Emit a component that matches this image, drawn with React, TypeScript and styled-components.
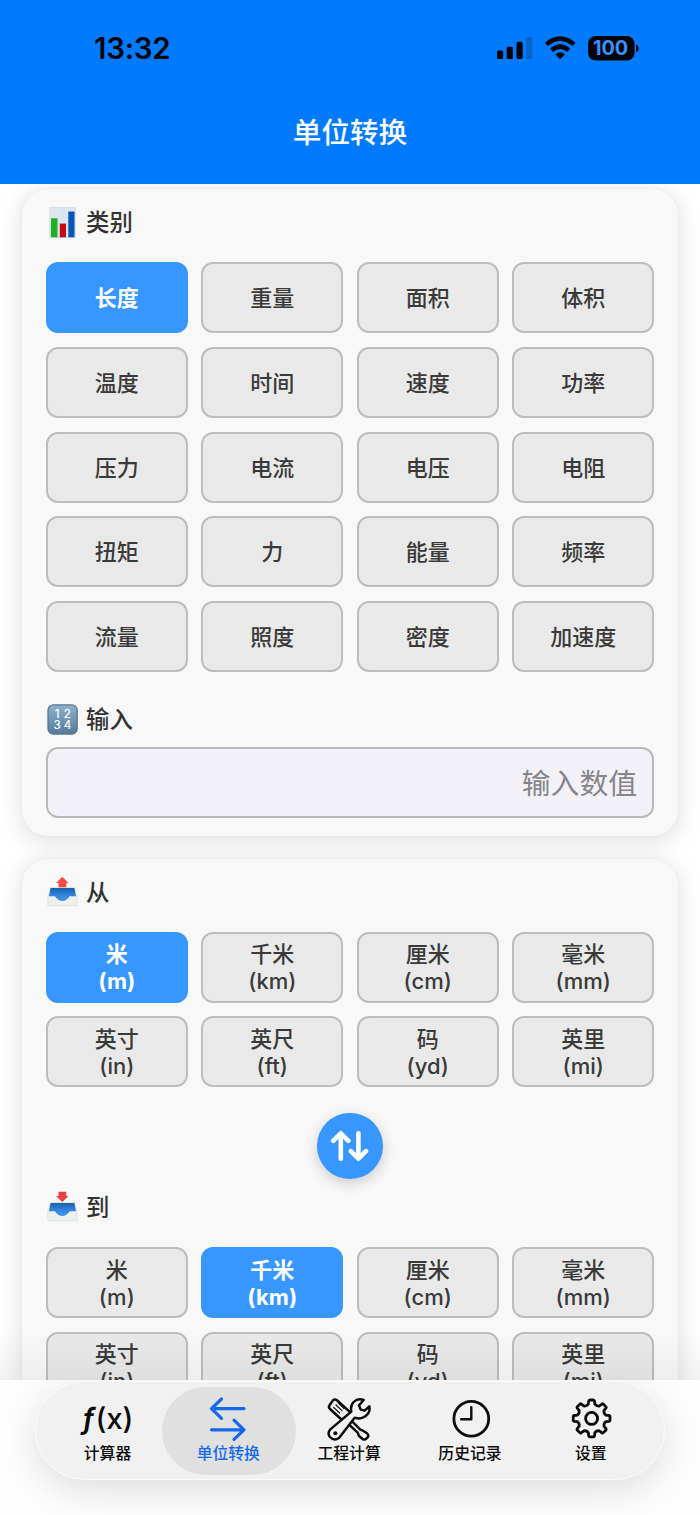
import React from "react";
import styled, { createGlobalStyle, css } from "styled-components";

const GlobalStyle = createGlobalStyle`
  * { box-sizing: border-box; }
  html, body { margin: 0; padding: 0; background: #fff; }
  body { font-family: Inter, "Noto Sans CJK SC", sans-serif; }
  button { font-family: inherit; }
`;

const Screen = styled.div`
  display: flex;
  flex-direction: column;
  width: 700px;
  height: 1515px;
  overflow: hidden;
  background: #fefefe;
`;

const Header = styled.header`
  flex: none;
  height: 183.5px;
  background: #007aff;
`;

const StatusBar = styled.div`
  display: flex;
  align-items: center;
  justify-content: space-between;
  height: 95px;
  padding: 0 61px 0 94px;
`;

const Clock = styled.span`
  font-size: 29.5px;
  font-weight: 600;
  letter-spacing: -0.3px;
  color: #04050c;
`;

const PageTitle = styled.h1`
  margin: 0;
  height: 75px;
  line-height: 75px;
  text-align: center;
  font-size: 28.6px;
  font-weight: 500;
  color: #fff;
`;

const Content = styled.main`
  flex: none;
  position: relative;
  height: 1196.5px;
  padding: 5.8px 22px 0;
  overflow: hidden;
  display: flex;
  flex-direction: column;
  gap: 22.8px;

  &::after {
    content: "";
    position: absolute;
    inset: auto 0 0 0;
    height: 50px;
    background: linear-gradient(rgba(0, 0, 0, 0), rgba(0, 0, 0, 0.045));
  }
`;

const Card = styled.section`
  flex: none;
  padding: 13px 24px 18px;
  border-radius: 25px;
  background: #f8f8f8;
  box-shadow: 0 4px 24px rgba(0, 0, 0, 0.13), 0 0 2px rgba(0, 0, 0, 0.07);
`;

const SectionTitle = styled.h2<{ $top?: number; $bottom?: number }>`
  display: flex;
  align-items: center;
  gap: 8px;
  height: 40px;
  margin: ${(p) => p.$top ?? 0}px 0 ${(p) => p.$bottom ?? 20.2}px;
  padding-left: 1px;
  font-size: 23.4px;
  font-weight: 500;
  color: #333;

  svg { flex: none; }
  span { padding-bottom: 2px; }
`;

const OptionGrid = styled.div`
  display: grid;
  grid-template-columns: repeat(4, 1fr);
  grid-auto-rows: 71px;
  gap: 13.6px 13.8px;
`;

const Option = styled.button<{ $selected?: boolean }>`
  display: flex;
  flex-direction: column;
  align-items: center;
  justify-content: center;
  padding: 2px 0 0;
  border: 2px solid #bdbdbd;
  border-radius: 12px;
  background: #e9e9e9;
  color: #3a3a3a;
  font-size: 22px;
  font-weight: 500;
  line-height: 27px;
  ${(p) =>
    p.$selected &&
    css`
      border-color: #3797ff;
      background: #3797ff;
      color: #fff;
      font-weight: 700;
    `}
`;

const ValueInput = styled.input`
  display: block;
  width: 100%;
  height: 70.7px;
  padding: 2px 15px 0;
  border: 2px solid #b9b9bb;
  border-radius: 12px;
  background: #f2f1f7;
  font: 400 28.8px Inter, "Noto Sans CJK SC", sans-serif;
  text-align: right;
  outline: none;

  &::placeholder { color: #85858b; opacity: 1; }
`;

const SwapButton = styled.button`
  display: flex;
  align-items: center;
  justify-content: center;
  width: 65.5px;
  height: 65.5px;
  margin: 26px auto 0;
  padding: 0;
  border: 0;
  border-radius: 50%;
  background: #3797ff;
  box-shadow: 0 4px 14px rgba(0, 0, 0, 0.18);
`;

const Footer = styled.footer`
  flex: 1;
  padding: 1px 35px 0;
  background: #fdfdfd;
  overflow: hidden;
`;

const TabBar = styled.nav`
  display: flex;
  align-items: center;
  height: 99px;
  padding: 0 5.5px;
  border: 1.5px solid #fcfcfc;
  border-radius: 50px;
  background: #f1f1f1;
  box-shadow: 0 10px 38px rgba(0, 0, 0, 0.12);
`;

const Tab = styled.a<{ $active?: boolean }>`
  display: flex;
  flex-direction: column;
  align-items: center;
  flex: none;
  width: 134px;
  height: 88px;
  margin-right: -13.2px;
  padding: 8px 2px 0 0;
  border-radius: 44px;
  background: ${(p) => (p.$active ? "#e0e0e0" : "transparent")};
  color: ${(p) => (p.$active ? "#1469ea" : "#0c0c0c")};
`;

const TabIcon = styled.span`
  display: flex;
  align-items: center;
  justify-content: center;
  height: 48px;
`;

const TabLabel = styled.span`
  font-size: 15.8px;
  font-weight: 500;
  line-height: 22px;
`;

const Formula = styled.span`
  font-size: 29.5px;
  font-weight: 500;
  line-height: 46px;
  padding-bottom: 2px;
  letter-spacing: -0.2px;
  white-space: nowrap;

  i { display: inline-block; font-weight: 600; margin-right: 1px; }
`;

const StatusIcons = () => (
  <svg width="144" height="30" viewBox="495 32 144 30">
    <g fill="#04050c">
      <rect x="497" y="49.5" width="6.2" height="8.5" rx="1.6" />
      <rect x="506.7" y="45.7" width="6.2" height="12.3" rx="1.6" />
      <rect x="516.5" y="40.8" width="6.2" height="17.2" rx="1.6" />
      <rect x="526.2" y="36" width="6" height="22" rx="1.6" fill="#0863cb" />
      <path d="M560.2 58.2 L555.4 53.4 Q560.2 49 565 53.4 Z" />
      <rect x="588" y="35" width="46.6" height="24.6" rx="8" />
      <path d="M636 43.5 Q638.8 44.5 638.8 47.3 Q638.8 50 636 51 Z" />
    </g>
    <g fill="none" stroke="#04050c" strokeWidth="4.5">
      <path d="M546.3 43.4 Q560.2 31.700 574.1 43.4" />
      <path d="M551.6 49.2 Q560.2 41.9 568.8 49.2" />
    </g>
    <text x="610.5" y="54.400" textAnchor="middle" fontFamily="Inter" fontSize="19.800" fontWeight="700" fill="#3d90ff">100</text>
  </svg>
);

const ChartIcon = () => (
  <svg width="31" height="31" viewBox="0 0 31 31">
    <rect x="2.8" y="0.6" width="25.6" height="30" fill="#dbe6f0" stroke="#c9d6e2" strokeWidth="0.6" />
    <path d="M3 6H28M3 11H28M3 16H28M3 21H28M8 1V30M15.5 1V30M23 1V30" stroke="#d0deea" strokeWidth="0.4" />
    <rect x="4" y="11.3" width="6.5" height="19" fill="#1fb025" />
    <rect x="12.8" y="16.6" width="6.2" height="13.7" fill="#c30d10" />
    <rect x="21.3" y="4.5" width="6.2" height="25.8" fill="#0d55b5" />
  </svg>
);

const NumbersIcon = () => (
  <svg width="31" height="31" viewBox="0 0 31 31">
    <defs>
      <linearGradient id="keycap" x1="0" y1="0" x2="0" y2="1">
        <stop offset="0" stopColor="#8fb3cd" />
        <stop offset="1" stopColor="#54799a" />
      </linearGradient>
    </defs>
    <rect x="1" y="0.9" width="29.2" height="29.2" rx="5.5" fill="url(#keycap)" stroke="#557695" strokeWidth="1.3" />
    <g fontFamily="Inter" fontSize="11.5" fontWeight="500" fill="#fff" textAnchor="middle">
      <text x="10.2" y="13.8">1</text>
      <text x="20.4" y="13.8">2</text>
      <text x="10.2" y="25.4">3</text>
      <text x="20.4" y="25.4">4</text>
    </g>
  </svg>
);

const TrayIcon = ({ direction }: { direction: "up" | "down" }) => (
  <svg width="31" height="31" viewBox="0 0 31 31">
    <defs>
      <linearGradient id={"tray-" + direction} x1="0" y1="0" x2="0" y2="1">
        <stop offset="0" stopColor="#1b5fa8" />
        <stop offset="0.5" stopColor="#2f82d8" />
        <stop offset="1" stopColor="#3f97e8" />
      </linearGradient>
    </defs>
    <path d="M3.5 11.5H27.5L30 20.500V29.800H0.800V20.500Z" fill="#eef0ee" stroke="#d3d8da" strokeWidth="0.6" />
    <path d="M3.600 11.900H27.400L29 20.300H22.600Q19.800 25.100 15.300 25.100Q10.800 25.100 8 20.300H1.900Z" fill={`url(#tray-${direction})`} />
    {direction === "up" ? (
      <path d="M15.300 0.800L21.600 7H19.300V11.300H11.500V7H9Z" fill="#fa4a42" />
    ) : (
      <path d="M11.500 0.800H19.300V5H21.600L15.300 11L9 5H11.500Z" fill="#ef4040" />
    )}
  </svg>
);

const SwapIcon = () => (
  <svg width="40" height="34" viewBox="330 1129.5 40 34" fill="none" stroke="#fff" strokeWidth="4.6" strokeLinecap="round" strokeLinejoin="round">
    <path d="M340.8 1159.2V1134.2M333.2 1141.3L340.8 1133.8L348.4 1141.3" />
    <path d="M358.4 1133.8V1158.8M350.8 1151.7L358.4 1159.2L366 1151.7" />
  </svg>
);

const ConvertIcon = () => (
  <svg width="40" height="48" viewBox="208.5 1394.5 40 48" fill="none" stroke="currentColor" strokeWidth="3.2" strokeLinecap="round" strokeLinejoin="round">
    <path d="M244.5 1408.2H212M222 1398.5L212 1408.2L222 1417.8" />
    <path d="M212 1429.3H244.5M234.5 1419.7L244.5 1429.3L234.5 1438.8" />
  </svg>
);

const ToolsIcon = () => (
  <svg width="46" height="48" viewBox="50 30 138 144" fill="none" stroke="currentColor" strokeWidth="7.4" strokeLinecap="round" strokeLinejoin="round">
    <path d="M71 46Q76 41 82 45L124 83L98 105L62 72Q56 66 61 60Z" />
    <path d="M73 67L91 84M80 60L98 77M88 55L104 71" strokeWidth="3.6" />
    <path d="M116 116L145 143L149 153L160 162Q166 166 171 161L176 156Q179 150 173 145L161 137L153 134L127 108" />
    <path
      d="M163 45Q146 38 133 51Q122 62 126 80L63 133Q53 145 62 156Q74 169 89 159L136 98Q153 105 168 94Q184 82 180 64L166 77L154 74L149 61Z"
      fill="#f1f1f1"
    />
    <circle cx="78" cy="145" r="6" fill="currentColor" stroke="none" />
  </svg>
);

const HistoryIcon = () => (
  <svg width="42" height="42" viewBox="0 0 42 42" fill="none" stroke="currentColor" strokeWidth="2.8" strokeLinecap="round" strokeLinejoin="round">
    <circle cx="22.3" cy="20.7" r="17.4" />
    <path d="M22.3 9.3V21.3H12.2" strokeWidth="2.4" />
  </svg>
);

const gearPath = Array.from({ length: 8 }, (_, i) => {
  const point = (radius: number, offset: number) => {
    const angle = ((i * 45 - 90 + offset) * Math.PI) / 180;
    return `${(21.6 + radius * Math.cos(angle)).toFixed(2)} ${(20.4 + radius * Math.sin(angle)).toFixed(2)}`;
  };
  return `${i ? "L" : "M"}${point(14.6, -13)}L${point(17.6, -9.5)}Q${point(18.5, -8.5)} ${point(18.5, -6.5)}L${point(18.5, 6.5)}Q${point(18.5, 8.5)} ${point(17.6, 9.5)}L${point(14.6, 13)}Q${point(13, 22.5)} ${point(14.6, 32)}`;
}).join("");

const GearIcon = () => (
  <svg width="42" height="42" viewBox="0 0 42 42" fill="none" stroke="currentColor" strokeWidth="2.8" strokeLinejoin="round">
    <path d={gearPath + "Z"} />
    <circle cx="21.6" cy="20.4" r="6" />
  </svg>
);

const categories = [
  "长度", "重量", "面积", "体积",
  "温度", "时间", "速度", "功率",
  "压力", "电流", "电压", "电阻",
  "扭矩", "力", "能量", "频率",
  "流量", "照度", "密度", "加速度",
];

const units = [
  ["米", "m"], ["千米", "km"], ["厘米", "cm"], ["毫米", "mm"],
  ["英寸", "in"], ["英尺", "ft"], ["码", "yd"], ["英里", "mi"],
];

const tabs = [
  { label: "计算器", icon: <Formula><i>ƒ</i>(x)</Formula> },
  { label: "单位转换", icon: <ConvertIcon /> },
  { label: "工程计算", icon: <ToolsIcon /> },
  { label: "历史记录", icon: <HistoryIcon /> },
  { label: "设置", icon: <GearIcon /> },
];

const UnitGrid = ({ selected }: { selected: string }) => (
  <OptionGrid>
    {units.map(([name, symbol]) => (
      <Option key={symbol} $selected={symbol === selected}>
        <span>{name}</span>
        <span>({symbol})</span>
      </Option>
    ))}
  </OptionGrid>
);

export default function App() {
  return (
    <Screen>
      <GlobalStyle />
      <Header>
        <StatusBar>
          <Clock>13:32</Clock>
          <StatusIcons />
        </StatusBar>
        <PageTitle>单位转换</PageTitle>
      </Header>
      <Content>
        <Card>
          <SectionTitle><ChartIcon /><span>类别</span></SectionTitle>
          <OptionGrid>
            {categories.map((name) => (
              <Option key={name} $selected={name === "长度"}>{name}</Option>
            ))}
          </OptionGrid>
          <SectionTitle $top={27.2} $bottom={8}><NumbersIcon /><span>输入</span></SectionTitle>
          <ValueInput placeholder="输入数值" />
        </Card>
        <Card>
          <SectionTitle><TrayIcon direction="up" /><span>从</span></SectionTitle>
          <UnitGrid selected="m" />
          <SwapButton aria-label="swap"><SwapIcon /></SwapButton>
          <SectionTitle $top={8}><TrayIcon direction="down" /><span>到</span></SectionTitle>
          <UnitGrid selected="km" />
        </Card>
      </Content>
      <Footer>
        <TabBar>
          {tabs.map(({ label, icon }) => (
            <Tab key={label} $active={label === "单位转换"}>
              <TabIcon>{icon}</TabIcon>
              <TabLabel>{label}</TabLabel>
            </Tab>
          ))}
        </TabBar>
      </Footer>
    </Screen>
  );
}
